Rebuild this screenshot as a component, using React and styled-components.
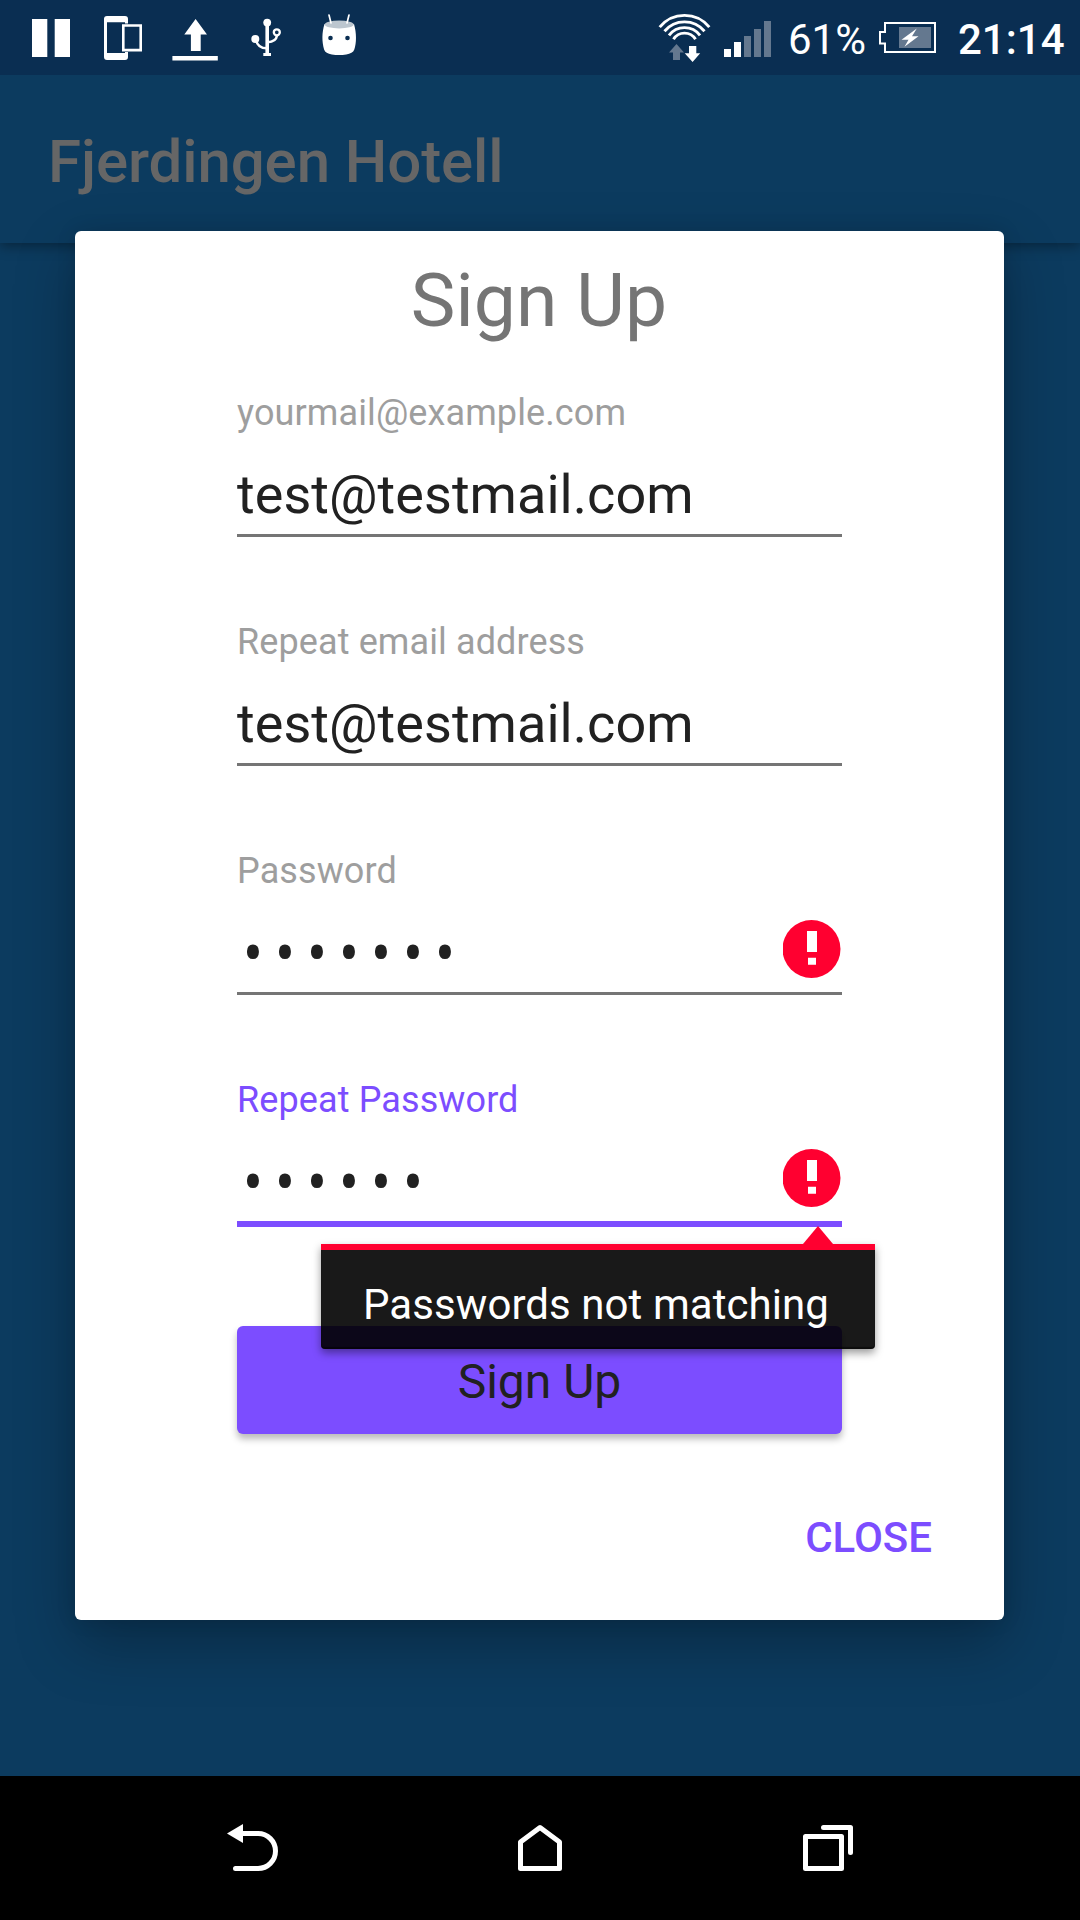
import React from "react";
import styled, { createGlobalStyle, css } from "styled-components";

const GlobalStyle = createGlobalStyle`
  * { box-sizing: border-box; }
  html, body { margin: 0; padding: 0; background: #0c3b5f; }
  body { font-family: Roboto, "Liberation Sans", sans-serif; }
`;

const muted = "#64788f";

const Screen = styled.div`
  position: relative;
  display: flex;
  flex-direction: column;
  width: 1080px;
  height: 1920px;
  overflow: hidden;
  background: #0c3b5f;
`;

const StatusBar = styled.header`
  position: relative;
  z-index: 1;
  display: flex;
  justify-content: space-between;
  height: 75px;
  background: #0a2e52;
  color: #fff;
`;

const StatusGroup = styled.div`
  display: flex;
  align-items: flex-start;
`;

const StatusText = styled.span`
  width: ${(p) => p.$width}px;
  padding-left: ${(p) => p.$inset}px;
  font-size: 42px;
  line-height: 79px;
  font-weight: ${(p) => (p.$strong ? 500 : 400)};
  white-space: nowrap;
`;

const Glyph = styled.svg`
  display: block;
  flex: none;
`;

const AppBar = styled.div`
  position: relative;
  display: flex;
  align-items: center;
  height: 168px;
  padding: 6px 48px 0;
  background: #0c3b5f;
  box-shadow: 0 3px 12px rgba(0, 0, 0, 0.38);
`;

const AppTitle = styled.h1`
  margin: 0;
  font-size: 60px;
  line-height: 70px;
  font-weight: 500;
  letter-spacing: -0.1px;
  color: #666;
`;

const Backdrop = styled.main`
  flex: 1;
`;

const NavBar = styled.nav`
  position: relative;
  display: flex;
  justify-content: space-between;
  height: 144px;
  padding: 0 200px;
  background: #000;
`;

const Overlay = styled.div`
  position: absolute;
  inset: 75px 0 144px;
  display: flex;
  align-items: center;
  justify-content: center;
  padding-right: 1px;
`;

const Dialog = styled.section`
  display: flex;
  flex-direction: column;
  width: 929px;
  height: 1389px;
  padding: 25px 162px 0;
  border-radius: 6px;
  background: #fff;
  box-shadow: 0 24px 60px rgba(0, 0, 0, 0.28), 0 0 20px rgba(0, 0, 0, 0.1);
`;

const DialogTitle = styled.h2`
  margin: 0 0 47px;
  font-size: 75px;
  line-height: 88px;
  font-weight: 400;
  letter-spacing: 0.1px;
  text-align: center;
  text-indent: -1px;
  color: #757575;
`;

const Fields = styled.div`
  display: flex;
  flex-direction: column;
  gap: 83px;
`;

const Field = styled.div`
  position: relative;
  display: flex;
  flex-direction: column;
  gap: 29px;
  height: 146px;
`;

const Label = styled.label`
  padding-top: 1px;
  font-size: 36px;
  line-height: 42px;
  letter-spacing: 0.11px;
  color: ${(p) => (p.$active ? "#7c4dff" : "#9e9e9e")};
`;

const InputRow = styled.div`
  display: flex;
  flex: none;
  justify-content: space-between;
  height: ${(p) => (p.$active ? 77 : 74)}px;
  border-bottom: ${(p) => (p.$active ? "6px solid #7c4dff" : "3px solid #757575")};
`;

const Value = styled.span`
  font-size: 54px;
  line-height: 63px;
  letter-spacing: 0.05px;
  color: #212121;
  ${(p) =>
    p.$secret &&
    css`
      display: flex;
    `}
`;

const Dot = styled.span`
  width: 32px;
  height: 63px;
  text-align: center;
  transform: scale(1.1, 1.28);
  transform-origin: 50% 30px;
`;

const AlertIcon = styled(Glyph)`
  margin-top: -1px;
  margin-right: 1px;
`;

const ErrorPopup = styled.div`
  position: absolute;
  z-index: 2;
  top: 166px;
  left: 84px;
  width: 554px;
  height: 105px;
  padding: 30px 0 0 42px;
  border-top: 6px solid #ff0030;
  border-radius: 0 0 4px 4px;
  background: rgba(0, 0, 0, 0.9);
  background-clip: padding-box;
  box-shadow: 0 4px 8px rgba(0, 0, 0, 0.4), inset 0 -2px 1px rgba(0, 0, 0, 0.5);
  font-size: 42px;
  line-height: 49px;
  letter-spacing: 0.07px;
  color: #fff;
  white-space: nowrap;
`;

const PopupArrow = styled.i`
  position: absolute;
  top: -24px;
  right: 42px;
  border: 15px solid transparent;
  border-top-width: 0;
  border-bottom: 18px solid #ff0030;
`;

const SubmitButton = styled.button`
  height: 108px;
  margin: 102px 0 0;
  padding: 4px 0 0;
  border: 0;
  border-radius: 6px;
  background: #7c4dff;
  box-shadow: 0 5px 7px rgba(0, 0, 0, 0.27);
  font: 400 48px/56px Roboto, sans-serif;
  color: #212121;
`;

const Actions = styled.footer`
  display: flex;
  justify-content: flex-end;
  margin: 80px -90px 0 0;
`;

const CloseButton = styled.button`
  padding: 0;
  border: 0;
  background: none;
  font: 500 42px/48px Roboto, sans-serif;
  color: #7c4dff;
`;

const Slot = ({ x, w, y = 0, h = 75, children }) => (
  <Glyph width={w} height={h} viewBox={`${x} ${y} ${w} ${h}`} fill="none">
    {children}
  </Glyph>
);

const Notifications = () => (
  <StatusGroup>
    <Slot x={0} w={90}>
      <path fill="#fff" d="M32 19h15.3v38H32zM54.7 19H70v38H54.7z" />
    </Slot>
    <Slot x={90} w={70}>
      <path
        fill="#fff"
        fillRule="evenodd"
        d="M107 16h18q3 0 3 3v38q0 3-3 3h-18q-3 0-3-3V19q0-3 3-3zM107 22.3V53h18V22.3z"
      />
      <path fill="#0a2e52" d="M121 23.5h8v28.5h-8z" />
      <path stroke="#fff" strokeWidth="2.6" d="M123.3 25.5h17.4v24.6h-17.4z" />
    </Slot>
    <Slot x={160} w={75}>
      <path fill="#fff" d="M195.6 19L207 34.6h-6.3V51h-9.8V34.6h-6.6zM172.4 56h45.4v4.6h-45.4z" />
    </Slot>
    <Slot x={235} w={65}>
      <path stroke="#fff" strokeWidth="3.6" d="M267.2 22v33" />
      <path stroke="#fff" strokeWidth="2.4" d="M256 40c1 5 5 8.3 11 8.3M277 35.5c-.5 4-4 6.4-9.5 6.7" />
      <circle cx="267.2" cy="22.6" r="3.9" fill="#fff" />
      <circle cx="255.3" cy="39" r="4" fill="#fff" />
      <circle cx="276.8" cy="32.3" r="3" stroke="#fff" strokeWidth="2.3" />
      <path fill="#fff" d="M263.3 53h7.7v3h-7.7z" />
    </Slot>
    <Slot x={300} w={80}>
      <path
        fill="#fff"
        d="M324.5 24c9 4.5 20 4.5 29.500 0 2.6 9 2.6 19 .3 25.5-1 3-4 4.2-8 4.9-5 .8-9.5.8-14.5 0-4-.7-6.8-1.9-7.7-4.900-2.3-8-2.3-17 .4-25.5z"
      />
      <ellipse cx="339.2" cy="24.5" rx="14.5" ry="3.9" fill="#bcc6cf" />
      <path stroke="#fff" strokeWidth="1.7" d="M329 15l2 8M349 15l-2 8" strokeLinecap="round" />
      <circle cx="330.5" cy="38" r="2.3" fill="#0a2e52" />
      <circle cx="347.5" cy="38" r="2.3" fill="#0a2e52" />
    </Slot>
  </StatusGroup>
);

const SystemStatus = () => (
  <StatusGroup>
    <Slot x={650} w={66}>
      <g stroke="#fff" strokeWidth="2.9">
        <path d="M659.7 27.2A32 32 0 0 1 709.3 27.2" />
        <path d="M664.5 31.3A26 26 0 0 1 704.5 31.3" />
        <path d="M669 35.3A19.5 19.5 0 0 1 700 35.3" />
        <path d="M673.5 39.2A13 13 0 0 1 695.5 39.2" />
      </g>
      <path fill={muted} d="M676.5 44l7.5 8.5h-4V60h-7v-7.5h-4z" />
      <path fill="#fff" d="M689 46h7.3v7.3h3.9L692.6 62l-7.9-8.7h4.3z" />
    </Slot>
    <Slot x={716} w={64}>
      <path fill="#fff" d="M724 49h7v8h-7zM734 42h7v15h-7z" />
      <path fill={muted} d="M744 36h7v21h-7zM754 29h7v28h-7zM764 21h7v36h-7z" />
    </Slot>
    <StatusText $width={90} $inset={8}>61%</StatusText>
    <Slot x={870} w={80}>
      <path stroke="#fff" strokeWidth="2" d="M885 23h50v29h-50v-8.5h-5V32h5z" />
      <path fill={muted} d="M899 27h32v21h-32z" />
      <path fill="#fff" d="M916.8 28.5L901.5 39.7h7L904.5 46.7 918.5 36.2h-6.5z" />
    </Slot>
    <StatusText $width={130} $inset={8} $strong>21:14</StatusText>
  </StatusGroup>
);

const ErrorMark = () => (
  <AlertIcon width="58" height="74" viewBox="0 0 58 74">
    <circle cx="28.5" cy="29" r="29" fill="#ff0030" />
    <path fill="#fff" d="M24 11h10v21H24zM25 37.8h8v7h-8z" />
  </AlertIcon>
);

const FormField = ({ label, value, secret, active, invalid, error }) => (
  <Field>
    <Label $active={active}>{label}</Label>
    <InputRow $active={active}>
      <Value $secret={secret}>
        {secret ? [...value].map((c, i) => <Dot key={i}>{c}</Dot>) : value}
      </Value>
      {invalid && <ErrorMark />}
    </InputRow>
    {error && (
      <ErrorPopup>
        <PopupArrow />
        {error}
      </ErrorPopup>
    )}
  </Field>
);

export default function App() {
  return (
    <Screen>
      <GlobalStyle />
      <StatusBar>
        <Notifications />
        <SystemStatus />
      </StatusBar>
      <AppBar>
        <AppTitle>Fjerdingen Hotell</AppTitle>
      </AppBar>
      <Backdrop />
      <Overlay>
        <Dialog>
          <DialogTitle>Sign Up</DialogTitle>
          <Fields>
            <FormField label="yourmail@example.com" value="test@testmail.com" />
            <FormField label="Repeat email address" value="test@testmail.com" />
            <FormField label="Password" value="•••••••" secret invalid />
            <FormField
              label="Repeat Password"
              value="••••••"
              secret
              active
              invalid
              error="Passwords not matching"
            />
          </Fields>
          <SubmitButton>Sign Up</SubmitButton>
          <Actions>
            <CloseButton>CLOSE</CloseButton>
          </Actions>
        </Dialog>
      </Overlay>
      <NavBar>
        <Slot x={200} y={1776} w={100} h={144}>
          <path fill="#fff" d="M227 1833.5l16-9.5v19z" />
          <path
            stroke="#fff"
            strokeWidth="5"
            strokeLinecap="round"
            d="M242 1833.5h16a17.5 17.5 0 0 1 0 35h-22.5"
          />
        </Slot>
        <Slot x={490} y={1776} w={100} h={144}>
          <path
            stroke="#fff"
            strokeWidth="5"
            strokeLinejoin="round"
            d="M520.5 1868.5V1842l19.5-14.5 19.5 14.5v26.5z"
          />
        </Slot>
        <Slot x={780} y={1776} w={100} h={144}>
          <g stroke="#fff" strokeWidth="5" strokeLinejoin="round" strokeLinecap="round">
            <path d="M805.5 1836.5h36v32h-36z" />
            <path d="M823.5 1827.5h27v25" />
          </g>
        </Slot>
      </NavBar>
    </Screen>
  );
}
